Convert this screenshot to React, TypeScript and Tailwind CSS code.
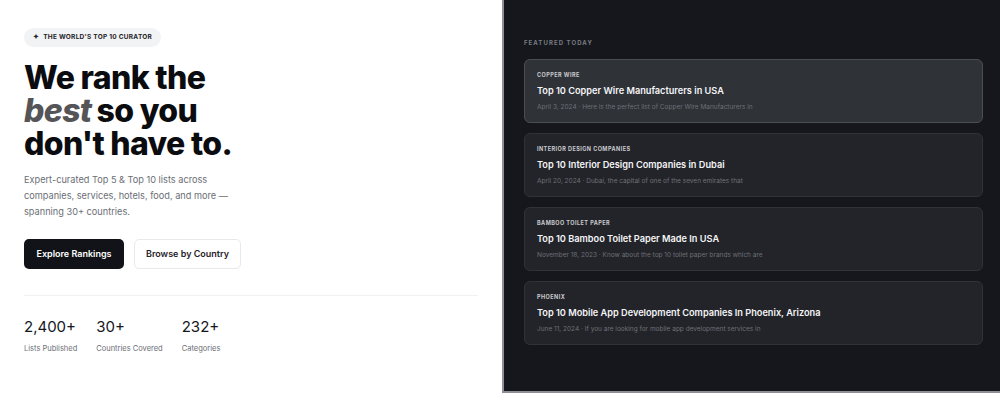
const featured = [
  {
    tag: 'Copper Wire',
    title: 'Top 10 Copper Wire Manufacturers in USA',
    meta: 'April 3, 2024 · Here is the perfect list of Copper Wire Manufacturers in',
    active: true,
  },
  {
    tag: 'Interior Design Companies',
    title: 'Top 10 Interior Design Companies in Dubai',
    meta: 'April 20, 2024 · Dubai, the capital of one of the seven emirates that',
  },
  {
    tag: 'Bamboo Toilet Paper',
    title: 'Top 10 Bamboo Toilet Paper Made In USA',
    meta: 'November 18, 2023 · Know about the top 10 toilet paper brands which are',
  },
  {
    tag: 'Phoenix',
    title: 'Top 10 Mobile App Development Companies In Phoenix, Arizona',
    meta: 'June 11, 2024 · If you are looking for mobile app development services in',
  },
];

const stats = [
  { value: '2,400+', label: 'Lists Published' },
  { value: '30+', label: 'Countries Covered' },
  { value: '232+', label: 'Categories' },
];

export default function App() {
  return (
    <div className="min-h-[414px] bg-white font-['Inter',sans-serif] text-[#0b0c0f]">
      <section className="grid grid-cols-[502px_1fr] h-[393px]">
        {/* Hero copy */}
        <div className="px-6 pt-7">
          <div className="flex w-fit items-center gap-1 rounded-full bg-[#f2f3f5] px-[9px] h-[19px] text-[6.5px] font-bold uppercase tracking-[0.04em] text-[#1f2228]">
            <span className="text-[7px]">✦</span> The World's Top 10 Curator
          </div>

          <h1 className="mt-[14px] text-[32px] leading-[33px] font-extrabold tracking-[-0.02em]">
            We rank the
            <br />
            <em className="text-[#555558] pr-[5px]">best</em>so you
            <br />
            don't have to.
          </h1>

          <p className="mt-[12px] w-[215px] text-[9.2px] leading-[16px] text-[#6b6e75]">
            Expert-curated Top 5 &amp; Top 10 lists across companies, services, hotels, food, and more — spanning 30+ countries.
          </p>

          <div className="mt-[19px] flex gap-[10px]">
            <button className="h-[30px] w-[100px] rounded-[5px] bg-[#111318] text-[9px] font-semibold text-white">
              Explore Rankings
            </button>
            <button className="h-[30px] w-[107px] rounded-[5px] border border-[#e8e9ec] bg-white text-[9px] font-semibold text-[#1f2228]">
              Browse by Country
            </button>
          </div>

          <div className="mt-[26px] h-px bg-[#f0f1f3]" />

          <div className="mt-[21px] flex gap-[19px]">
            {stats.map((s) => (
              <div key={s.label}>
                <div className="text-[15px] leading-[20px] font-normal text-[#15171c]">{s.value}</div>
                <div className="mt-[6px] text-[7.5px] text-[#6b6e75]">{s.label}</div>
              </div>
            ))}
          </div>
        </div>

        {/* Featured list */}
        <div className="border-l-2 border-b-2 border-[#8d9096] bg-[#15171c] pl-[20px] pr-[17px] pt-[38px]">
          <div className="text-[6px] font-bold uppercase tracking-[0.18em] text-[#797c83]">Featured Today</div>
          <div className="mt-[12px] flex flex-col gap-[10px]">
            {featured.map((f) => (
              <div
                key={f.title}
                className={
                  f.active
                    ? 'h-[64px] rounded-[6px] border border-[#4a4d53] bg-[#2f3237] px-3 pt-[11px]'
                    : 'h-[64px] rounded-[6px] border border-[#30323a] bg-[#232429] px-3 pt-[11px]'
                }
              >
                <div className="text-[5.5px] font-bold uppercase tracking-[0.08em] text-[#c9cbd0]">{f.tag}</div>
                <div className="mt-[5px] text-[9.2px] font-semibold text-[#f4f5f7]">{f.title}</div>
                <div className="mt-[5px] text-[6.5px] text-[#6d7078]">{f.meta}</div>
              </div>
            ))}
          </div>
        </div>
      </section>
    </div>
  );
}
